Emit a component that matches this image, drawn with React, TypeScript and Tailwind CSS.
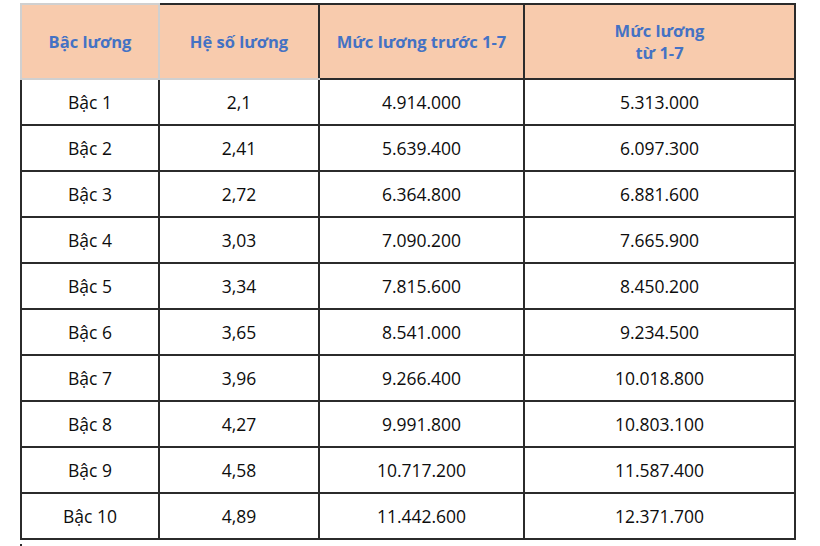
const ROWS: [string, string, string, string][] = [
  ['Bậc 1', '2,1', '4.914.000', '5.313.000'],
  ['Bậc 2', '2,41', '5.639.400', '6.097.300'],
  ['Bậc 3', '2,72', '6.364.800', '6.881.600'],
  ['Bậc 4', '3,03', '7.090.200', '7.665.900'],
  ['Bậc 5', '3,34', '7.815.600', '8.450.200'],
  ['Bậc 6', '3,65', '8.541.000', '9.234.500'],
  ['Bậc 7', '3,96', '9.266.400', '10.018.800'],
  ['Bậc 8', '4,27', '9.991.800', '10.803.100'],
  ['Bậc 9', '4,58', '10.717.200', '11.587.400'],
  ['Bậc 10', '4,89', '11.442.600', '12.371.700'],
];

export default function App() {
  return (
    <div className="w-[820px] h-[546px] overflow-hidden bg-white font-['Open_Sans',sans-serif]">
      <table className="ml-[20px] mt-[3px] border-collapse table-fixed w-[774px]">
        <colgroup>
          <col className="w-[138px]" />
          <col className="w-[160px]" />
          <col className="w-[205px]" />
          <col className="w-[271px]" />
        </colgroup>
        <thead>
          <tr className="h-[75px] bg-[#f8cbad] text-[#4472c4] text-[16.5px] font-bold leading-[22px]">
            <th className="border-2 border-[#d0d0d0] text-center align-middle">Bậc lương</th>
            <th className="border-2 border-[#2b2b2b] border-b-[#d0d0d0] text-center align-middle">Hệ số lương</th>
            <th className="border-2 border-[#2b2b2b] text-center align-middle">Mức lương trước 1-7</th>
            <th className="border-2 border-[#2b2b2b] text-center align-middle">
              Mức lương
              <br />
              từ 1-7
            </th>
          </tr>
        </thead>
        <tbody>
          {ROWS.map((r) => (
            <tr key={r[0]} className="h-[46px] text-[17.5px] text-[#0d0d0d]">
              {r.map((c, i) => (
                <td key={i} className="border-2 border-[#2b2b2b] text-center align-middle p-0">{c}</td>
              ))}
            </tr>
          ))}
        </tbody>
      </table>
      <div className="ml-[20px] mt-[4px] w-[2px] h-[10px] bg-[#2b2b2b]" />
    </div>
  );
}
